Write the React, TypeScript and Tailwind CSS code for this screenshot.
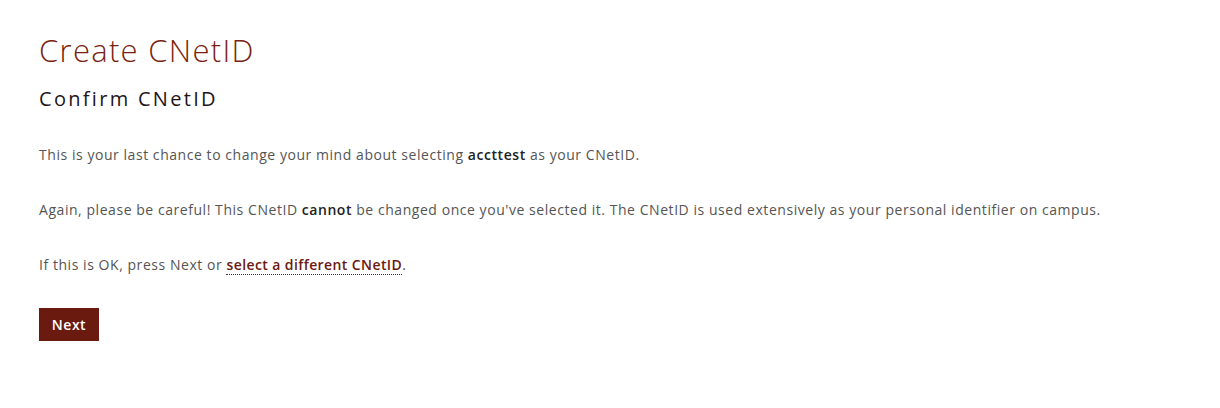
export default function App() {
  return (
    <div className="min-h-[408px] bg-white px-[39px] pt-[30px]" style={{ fontFamily: '"Open Sans", "Liberation Sans", sans-serif' }}>
      <h1 className="text-[31px] leading-[40px] font-light tracking-[1.3px] text-[#7a1f12]">Create CNetID</h1>
      <h2 className="mt-[16px] text-[20px] leading-[26px] tracking-[2.3px] text-[#1f1518]">Confirm CNetID</h2>
      <p className="mt-[33px] text-[14px] leading-[20px] tracking-[0.55px] text-[#555]">
        This is your last chance to change your mind about selecting <b className="font-semibold text-[#222]">accttest</b> as your CNetID.
      </p>
      <p className="mt-[35px] text-[14px] leading-[20px] tracking-[0.55px] text-[#555]">
        Again, please be careful! This CNetID <b className="font-semibold text-[#222]">cannot</b> be changed once you've selected it. The CNetID is used extensively as your personal identifier on campus.
      </p>
      <p className="mt-[35px] text-[14px] leading-[20px] tracking-[0.55px] text-[#555]">
        If this is OK, press Next or{" "}
        <a className="font-semibold tracking-[0.4px] text-[#6b1a0f] border-b border-dotted border-[#6b1a0f]">select a different CNetID</a>.
      </p>
      <button className="mt-[33px] h-[33px] w-[60px] bg-[#6b1a0f] text-white text-[14px] tracking-[0.5px] font-semibold">Next</button>
    </div>
  );
}
